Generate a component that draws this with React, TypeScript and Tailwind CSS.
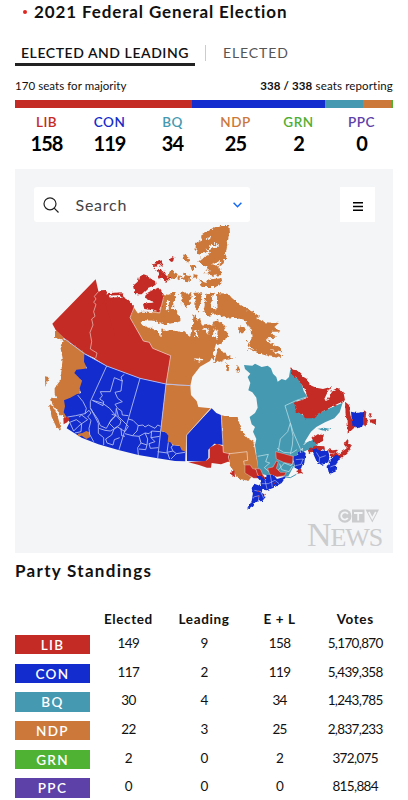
import type { ReactNode } from "react";

type Party = {
    name: string;
    text: string;
    bg: string;
    elected: number;
    leading: number;
    votes: string;
};

const parties: Party[] = [
    { name: "LIB", text: "text-[#c62a24]", bg: "bg-[#c42b25]", elected: 149, leading: 9, votes: "5,170,870" },
    { name: "CON", text: "text-[#122ccb]", bg: "bg-[#122ccd]", elected: 117, leading: 2, votes: "5,439,358" },
    { name: "BQ", text: "text-[#4599b1]", bg: "bg-[#4599b1]", elected: 30, leading: 4, votes: "1,243,785" },
    { name: "NDP", text: "text-[#cc783b]", bg: "bg-[#cc783b]", elected: 22, leading: 3, votes: "2,837,233" },
    { name: "GRN", text: "text-[#50ae33]", bg: "bg-[#50b233]", elected: 2, leading: 0, votes: "372,075" },
    { name: "PPC", text: "text-[#5d40a8]", bg: "bg-[#5d40a8]", elected: 0, leading: 0, votes: "815,884" },
];

const RED = "#c42b25";
const BLUE = "#122ccd";
const TEAL = "#4599b1";
const ORANGE = "#cc783b";
const WATER = "#f4f5f7";

const Region = ({ fill, pts }: { fill: string; pts: string[] }) => (
    <g fill={fill}>
        {pts.map((p) => <polygon key={p} points={p}/>)}
    </g>
);

const CanadaMap = () => (
    <svg viewBox="0 21 1134 909" className="block h-[303px] w-full" aria-label="Results map">
        <defs>
            {/*Roughens the coastlines*/}
            <filter id="arctic" x="-5%" y="-5%" width="110%" height="110%" colorInterpolationFilters="sRGB">
                <feTurbulence type="fractalNoise" baseFrequency="0.08" numOctaves="3" seed="7"/>
                <feDisplacementMap in="SourceGraphic" scale="18" xChannelSelector="R" yChannelSelector="G"/>
            </filter>
            <filter id="coast" x="-5%" y="-5%" width="110%" height="110%" colorInterpolationFilters="sRGB">
                <feTurbulence type="fractalNoise" baseFrequency="0.1" numOctaves="2" seed="3"/>
                <feDisplacementMap in="SourceGraphic" scale="10" xChannelSelector="R" yChannelSelector="G"/>
            </filter>
        </defs>

        {/*Nunavut*/}
        <g filter="url(#arctic)">
            <Region fill={ORANGE} pts={[
                "640,30 642,60 636,92 630,128 622,146 606,156 618,166 620,180 598,182 566,174 578,160 562,152 550,142 558,122 541,112 543,84 560,76 558,62 588,42 615,30",
                "550,192 572,200 590,192 620,190 622,208 600,216 560,216",
                "502,115 512,118 524,134 520,146 508,136", "524,146 542,152 544,162 530,162",
                "508,176 526,180 524,202 508,200 500,190", "466,166 486,172 482,192 464,196 460,180",
                "536,176 548,180 546,192 534,190", "486,188 500,182 496,196",
                "492,234 526,232 530,246 524,264 514,280 500,264 506,250",
                "534,234 562,232 558,256 548,290 540,276 542,258",
                "574,236 592,230 600,234 590,256 590,274 604,284 606,234 640,236 650,248 666,262 690,278 712,290 732,302 724,312 750,322 792,324 778,336 796,350 766,350 786,368 752,370 774,386 794,396 802,412 768,406 744,410 706,398 698,382 714,366 704,340 698,328 684,314 656,306 630,310 608,296 576,304 566,286 572,258",
                "694,402 730,404 760,402 792,418 802,430 760,424 722,412",
                "586,400 612,398 632,420 660,430 626,436 604,444 592,428",
                "634,448 646,450 644,466 634,464", "664,454 674,456 672,470 662,468",
                "674,328 690,338 688,352 672,352", "466,234 482,234 480,248 466,246",
                "440,240 478,244 474,278 494,296 520,302 536,300 552,314 560,332 592,328 604,312 630,332 642,366 618,380 608,400 574,420 566,440 520,440 430,400 360,330 350,300 382,290 432,292",
            ]}/>
            <Region fill={WATER} pts={[
                "374,318 392,316 420,318 448,328 476,324 500,318 520,322 532,334 524,366 516,352 496,352 476,344 456,348 440,342 436,368 428,346 404,334 384,330",
                "482,276 492,250 500,276 522,294 536,304 532,334 510,330 490,306",
                "580,94 606,86 612,92 594,98 570,110", "556,118 584,108 588,114 572,122 560,134", "588,148 614,138 616,144 606,152",
                "574,68 586,62 582,76", "568,168 584,166 580,176 570,176",
                "596,340 608,348 606,374 594,364", "564,338 586,342 576,356", "599,238 607,238 605,268 597,272",
                "454,254 462,254 461,288 452,284", "548,372 546,346 537,350 540,364",
                "548,294 574,306 600,300 600,316 582,324 566,320 552,312",
            ]}/>
            <Region fill={RED} pts={["410,146 440,136 446,146 418,156", "424,166 442,164 464,190 454,200 436,192 430,180", "464,132 478,124 474,142 464,144"]}/>
        </g>
        <polygon fill={ORANGE} points="357,278 372,300 380,330 408,344 430,370 470,362 482,352 500,360 512,358 524,372 540,376 556,366 578,366 600,374 612,380 597,415 585,438 555,455 532,485 526,512 453,508 467,422 413,400 403,382 385,378 345,308"/>
        <g filter="url(#coast)">
            <Region fill={WATER} pts={["538,430 562,432 556,440 538,436", "604,384 612,390 598,440 596,410", "376,322 404,330 420,338 396,338", "426,336 440,336 436,366", "520,340 532,344 524,368"]}/>
            <Region fill={RED} pts={[
                "386,178 402,184 408,192 420,198 422,210 400,218 380,238 360,238 354,212 368,200 372,186",
                "412,226 430,218 446,238 444,256 434,294 412,286 388,282 384,268 398,264 416,262 390,248 392,236",
                "255,226 275,225 273,235 320,232 326,246 340,254 357,272 350,300 320,290 255,250",
            ]}/>
            <Region fill={WATER} pts={["282,242 316,240 324,250 316,246 284,248", "398,256 416,264 398,262"]}/>
        </g>

        {/*Yukon and Northwest Territories*/}
        <g stroke="#f0cdc5" strokeWidth="2" strokeLinejoin="round">
            <polygon fill={RED} stroke="none" points="252,230 284,248 325,252 343,262 357,278 345,308 385,378 403,382 413,400 467,422 453,507 375,490 275,453 240,431"/>
            <polygon fill={RED} stroke="none" points="242,193 112,326 122,345 147,370 210,416 243,431 300,360 260,232 250,228"/>
            <polyline fill="none" points="251,229 238,244 243,252 236,262 243,268 236,290 240,304 230,312 234,330 225,352 230,380 226,402 246,414 242,430"/>
            <polyline fill="none" points="357,278 345,308 385,378 403,382 413,400 467,422 453,507"/>
            <polyline fill="none" points="386,288 434,294 446,246"/>
        </g>

        {/*British Columbia*/}
        <g filter="url(#coast)">
            <Region fill={ORANGE} pts={[
                "120,346 148,370 140,376 120,368",
                "146,370 210,414 217,440 212,464 187,470 194,490 204,502 198,532 187,544 155,556 154,602 146,608 130,590 112,568 108,548 124,550 119,538 119,520 133,500 139,470 143,430 136,396",
                "102,568 114,574 126,598 133,622 138,646 124,636 110,606",
                "90,484 103,487 97,500 91,516",
            ]}/>
        </g>

        {/*Prairies*/}
        <polygon fill={BLUE} points="208,416 275,453 375,490 453,507 437,648 460,654 472,690 500,694 512,708 511,739 480,738 428,730 370,720 310,705 250,688 200,668 155,640 164,622 146,592 150,574 147,556 166,548 185,538 198,534 194,520 201,498 190,486 178,474 184,464 204,462 216,460 207,440"/>
        <polygon fill={ORANGE} points="453,509 526,512 528,540 545,558 550,576 587,580 515,660 513,710 500,706 494,692 474,690 466,682 458,680 460,662 452,652 437,648"/>
        <Region fill={ORANGE} pts={["188,656 202,654 214,648 224,652 226,666 214,672 200,662 190,664"]}/>
        <Region fill={RED} pts={["145,610 158,604 164,614 156,622 146,628"]}/>
        <g fill="none" stroke="#b9c2f2" strokeWidth="2.6" strokeLinejoin="round">
            <polyline points="147,370 208,416 275,453 375,490 453,507 527,512"/>
            <polyline points="275,453 226,560 226,578 250,625 250,655 266,668 266,690"/>
            <polyline points="375,490 340,612 312,704"/>
            <polyline points="453,507 437,648 428,730"/>
            <polyline points="328,478 318,486 322,498 298,488 286,530 256,530 262,542 254,552 266,560 264,572 232,556"/>
            <polyline points="322,496 318,528 300,532 308,550 322,560 300,568 308,580 320,588 322,600 340,602"/>
            <polyline points="232,556 262,564 284,580 302,602 290,612 274,640 256,632 248,612 226,580"/>
            <polyline points="302,602 282,624 298,640 314,630 318,618 304,602 290,598"/>
            <polyline points="302,602 304,580 310,604 340,634 330,650 308,636 286,648 270,646 252,640"/>
            <polyline points="298,640 290,660 272,672 276,684 294,690 298,674 314,668"/>
            <polyline points="318,640 320,662 330,664"/>
            <polyline points="188,540 204,560 214,580 210,596 182,602 158,606"/>
            <polyline points="210,596 222,586 228,594 218,606 228,616 222,640 224,658 236,680"/>
            <polyline points="164,622 184,614 200,626 218,614 200,600 192,606"/>
            <polyline points="164,622 176,648 190,634 200,626 198,650 180,654"/>
            <polyline points="340,612 354,616 370,632 384,630 390,636 400,630 420,640 428,630 437,634"/>
            <polyline points="330,656 352,662 366,648 370,630"/>
            <polyline points="352,662 372,664 390,654 402,656 410,648 436,650"/>
            <polyline points="372,664 378,684 368,698 370,720"/>
            <polyline points="378,684 396,690 398,672 390,654"/>
            <polyline points="396,690 392,704 372,702"/>
            <polyline points="410,648 408,668 420,680 402,686 406,700 430,698"/>
            <polyline points="408,668 434,664"/>
            <polyline points="428,710 458,714 464,732"/>
            <polyline points="460,682 456,712 474,708 468,696 476,690"/>
            <polyline points="474,708 484,716 510,712"/>
            <polyline points="484,716 468,732"/>
        </g>

        {/*Ontario*/}
        <g filter="url(#coast)">
            <Region fill={ORANGE} pts={[
                "618,600 640,606 668,606 674,632 682,652 698,670 716,680 722,712 732,764 720,772 700,798 676,792 662,780 640,740 625,712",
            ]}/>
            <Region fill={WATER} pts={["682,646 696,648 694,652 682,652"]}/>
            <Region fill={RED} pts={["648,770 658,766 660,782 650,786"]}/>
        </g>
        <polygon fill={BLUE} points="590,580 604,594 618,600 625,690 598,686 580,704 580,728 570,740 516,738 515,660"/>
        <polygon fill={RED} points="624,694 606,686 584,698 584,728 572,738 520,742 552,750 576,758 588,758 590,744 618,748 645,738 643,714 626,712"/>
        <g fill="none" stroke="#f0d5c2" strokeWidth="2.2">
            <polyline points="587,580 515,660 513,738"/>
            <polyline points="619,600 625,712 644,716 696,710 698,736 686,738 688,750"/>
            <polyline points="644,740 640,726 644,714"/>
            <polyline points="716,680 724,720 732,766"/>
        </g>

        {/*Quebec*/}
        <polygon fill={TEAL} points="687,450 712,452 720,446 740,456 758,452 768,460 774,476 784,486 788,500 800,492 812,496 822,486 826,462 836,480 852,494 862,512 866,528 877,545 858,556 845,556 842,580 858,596 872,606 898,608 906,596 983,563 974,592 958,610 930,622 904,636 888,650 872,676 858,706 846,720 838,750 820,784 790,784 738,778 730,762 726,730 720,690 724,672 714,650 720,636 710,628 704,606 720,594 728,578 724,548 712,532 700,526 706,504 698,486 706,476 690,462"/>
        <g filter="url(#coast)">
            <Region fill={TEAL} pts={["906,642 926,638 952,643 932,649", "876,682 896,672 908,684 898,698 862,710 864,692"]}/>
            <Region fill={RED} pts={["890,670 908,658 926,660 924,678 904,688", "878,704 900,692 928,694 930,704 900,708 882,714"]}/>
        </g>
        <g fill="none" stroke="#b6dce4" strokeWidth="2.4">
            <polyline points="877,545 845,556 810,572 834,650 858,706"/>
            <polyline points="826,624 818,650 796,672 790,708"/>
            <polyline points="826,624 834,664 832,690 826,718"/>
            <polyline points="728,724 760,718 752,740 764,744 748,758 762,770"/>
            <polyline points="786,700 806,712 830,714 846,704"/>
            <polyline points="784,772 808,744 828,752 844,726"/>
            <polyline points="794,746 800,764 822,770 832,754"/>
        </g>

        {/*Labrador and the Atlantic provinces*/}
        <g filter="url(#coast)">
            <Region fill={RED} pts={[
                "824,452 834,464 846,466 866,486 876,492 884,510 904,518 924,522 946,516 950,530 972,520 986,535 990,556 944,578 906,598 900,610 870,610 862,596 842,590 838,562 858,556 878,548 868,520 848,492 832,480",
                "990,560 1002,570 1006,600 1012,618 1018,638 998,656 998,620 992,600",
                "1044,584 1054,590 1052,606 1060,618 1050,636 1042,616",
                "1060,600 1070,594 1066,610", "1064,614 1084,612 1082,628 1070,624",
                "936,702 952,706 970,704 960,714 944,714", "996,674 1008,690 1004,706 986,724 972,736 962,726 980,710 996,700 986,688",
                "946,716 972,712 966,726 948,726",
            ]}/>
            <Region fill={WATER} pts={["928,552 942,522 950,528 936,558"]}/>
            <Region fill={BLUE} pts={[
                "1008,590 1026,594 1048,590 1046,630 1028,640 1012,632",
                "890,704 906,700 922,708 938,704 944,724 940,742 920,750 906,742 898,724",
                "944,736 962,720 978,726 964,744 962,770 942,776 938,758",
                "836,728 850,718 856,704 872,714 868,744 854,766 840,758",
            ]}/>
            <Region fill={RED} pts={["844,768 858,762 860,774 848,776"]}/>
        </g>

        {/*Southern Ontario and Quebec*/}
        <g stroke={WATER} strokeWidth="1">
            <Region fill={RED} pts={[
                "782,710 806,716 834,724 832,748 806,742 784,732",
                "690,750 706,750 712,760 724,764 732,790 716,790 690,774",
                "722,760 736,762 744,780 754,792 742,794 728,780",
                "758,760 774,756 784,738 790,740 784,760 796,772 814,772 808,782 786,786 764,778",
            ]}/>
        </g>
        <g filter="url(#coast)">
            <Region fill={BLUE} pts={[
                "724,784 738,782 750,796 756,780 776,780 786,792 814,784 800,804 776,818 756,826 742,824 740,838 752,846 742,858 722,860 714,872 696,884 710,858 714,838 710,820 718,806 738,814 736,798",
            ]}/>
        </g>
        <g fill="none" stroke="#d2d8f7" strokeWidth="1.6">
            <polyline points="750,796 756,822"/>
            <polyline points="766,780 772,816"/>
            <polyline points="740,806 760,806 780,796 792,806"/>
            <polyline points="718,826 738,830 746,850"/>
            <polyline points="716,846 732,842 730,858"/>
            <polyline points="842,734 864,732 858,748 842,752"/>
            <polyline points="904,712 914,728 932,722"/>
            <polyline points="914,728 912,744"/>
            <polyline points="946,756 962,750"/>
        </g>
        <g fill="none" stroke={RED} strokeWidth="3">
            <path d="M726 826l6 4M748 840l4-2M776 806l6-3M730 844l5-2"/>
        </g>
        <g fill="none" stroke={TEAL} strokeWidth="3">
            <path d="M812 786l14 2 18-10M836 758l8-8M860 712l14-8"/>
        </g>
    </svg>
);

const CtvLogo = () => (
    <div className="absolute right-[11px] bottom-[3px] flex flex-col items-end text-[#cbccce]">
        <svg viewBox="0 0 41 14" className="mr-[3px] h-3.5 w-[41px]">
            <circle cx="6.8" cy="7" r="6.7" fill="currentColor"/>
            <path d="M9.8 5A3.6 3.6 0 1 0 9.8 9" fill="none" stroke={WATER} strokeWidth="1.8"/>
            <rect x="14" y="0.5" width="12.5" height="13" fill="currentColor"/>
            <path d="M16 4h8.5M20.2 4v7.5" stroke={WATER} strokeWidth="1.8"/>
            <path d="M27.5 0.5H41L34.3 13.5z" fill="currentColor"/>
            <path d="M30.8 3L34.3 9.5L37.8 3" fill="none" stroke={WATER} strokeWidth="1.6"/>
        </svg>
        <div className="font-['Liberation_Serif',serif] text-[26px] leading-[24px] tracking-[-1.1px]">
            <span className="text-[34px] leading-[24px]">N</span>EWS
        </div>
    </div>
);

const HeadCell = ({ children }: { children?: ReactNode }) => (
    <div className="text-center text-[13.5px] font-bold tracking-[0.6px]">{children}</div>
);

const App = () => {
    return (
        <div className="h-[800px] w-[408px] overflow-hidden bg-white pr-[15px] pl-[15px] font-[Lato,sans-serif] text-[#111]">
            {/*Heading*/}
            <div className="flex h-6 items-center pl-2">
                <span className="size-1 rounded-full bg-[#e0271f]"/>
                <h1 className="ml-[7px] text-[17px] leading-6 font-bold tracking-[0.88px] whitespace-nowrap">2021 Federal General Election</h1>
            </div>

            {/*Tabs*/}
            <div className="mt-[17px] flex h-[25px] items-start">
                <div className="flex h-[25px] w-[180px] items-center justify-center border-b-3 border-[#222] text-[14px] font-semibold tracking-[0.55px] whitespace-nowrap">
                    ELECTED AND LEADING
                </div>
                <div className="mt-1 ml-2.5 h-4 w-px bg-[#ccc]"/>
                <div className="ml-[17px] flex h-[23px] items-center text-[14px] tracking-[0.9px] text-[#555]">ELECTED</div>
            </div>

            {/*Seat bar*/}
            <div className="mt-[11px] flex h-[18px] items-center justify-between text-[11.5px] whitespace-nowrap">
                <span className="tracking-[0.05px]">170 seats for majority</span>
                <span className="tracking-[0.15px]"><b>338 / 338</b> seats reporting</span>
            </div>
            <div className="mt-[5px] flex h-[7.5px]">
                {parties.map((p) => (
                    <div key={p.name} className={p.bg} style={{ flexGrow: p.elected + p.leading }}/>
                ))}
            </div>
            <div className="mt-[6.5px] grid grid-cols-6 text-center">
                {parties.map((p) => (
                    <div key={p.name}>
                        <div className={`text-[13.5px] leading-4 font-semibold tracking-[0.5px] ${p.text}`}>{p.name}</div>
                        <div className="mt-px mb-0.5 text-[20px] leading-6 font-bold tracking-[-0.9px] text-black">{p.elected + p.leading}</div>
                    </div>
                ))}
            </div>

            {/*Map*/}
            <div className="relative mt-3 h-[384px] bg-[#f4f5f7] pt-[18px]">
                <div className="flex h-[35px] justify-between pr-[18px] pl-[18.5px]">
                    <div className="flex w-[216px] items-center rounded-[3px] bg-white pr-2 pl-[9px]">
                        <svg viewBox="0 0 16 16" className="size-4" fill="none" stroke="#222" strokeWidth="1.2">
                            <circle cx="7" cy="6.8" r="6"/>
                            <path d="M11.2 11.2L15.5 15.5"/>
                        </svg>
                        <span className="ml-[17px] text-[16px] tracking-[0.75px] text-[#444]">Search</span>
                        <svg viewBox="0 0 9 6" className="ml-auto h-1.5 w-[9px]" fill="none" stroke="#1769f2" strokeWidth="1.5">
                            <path d="M0.6 0.8L4.5 4.8L8.4 0.8"/>
                        </svg>
                    </div>
                    <div className="flex w-[35px] items-center justify-center bg-white pt-[3px]">
                        <svg viewBox="0 0 10 9" className="h-[9px] w-2.5" stroke="#000" strokeWidth="1.5">
                            <path d="M0 0.8h10M0 4.5h10M0 8.2h10"/>
                        </svg>
                    </div>
                </div>
                <CanadaMap/>
                <CtvLogo/>
            </div>

            {/*Standings table*/}
            <h2 className="mt-[6px] text-[17px] leading-6 font-bold tracking-[1.3px]">Party Standings</h2>
            <div className="mt-[26px] grid h-5 grid-cols-5 items-center">
                <HeadCell/>
                <HeadCell>Elected</HeadCell>
                <HeadCell>Leading</HeadCell>
                <HeadCell>E + L</HeadCell>
                <HeadCell>Votes</HeadCell>
            </div>
            <div className="mt-1.5 flex flex-col gap-[9.37px]">
                {parties.map((p) => (
                    <div key={p.name} className="grid h-[19.3px] grid-cols-5 text-center text-[13.5px] leading-[17px] tracking-[-0.65px]">
                        <div className={`h-[19.3px] w-[75px] text-[13.5px] leading-5 font-semibold tracking-[1.3px] text-white ${p.bg}`}>{p.name}</div>
                        <div>{p.elected}</div>
                        <div>{p.leading}</div>
                        <div>{p.elected + p.leading}</div>
                        <div>{p.votes}</div>
                    </div>
                ))}
            </div>
        </div>
    );
};

export default App;
